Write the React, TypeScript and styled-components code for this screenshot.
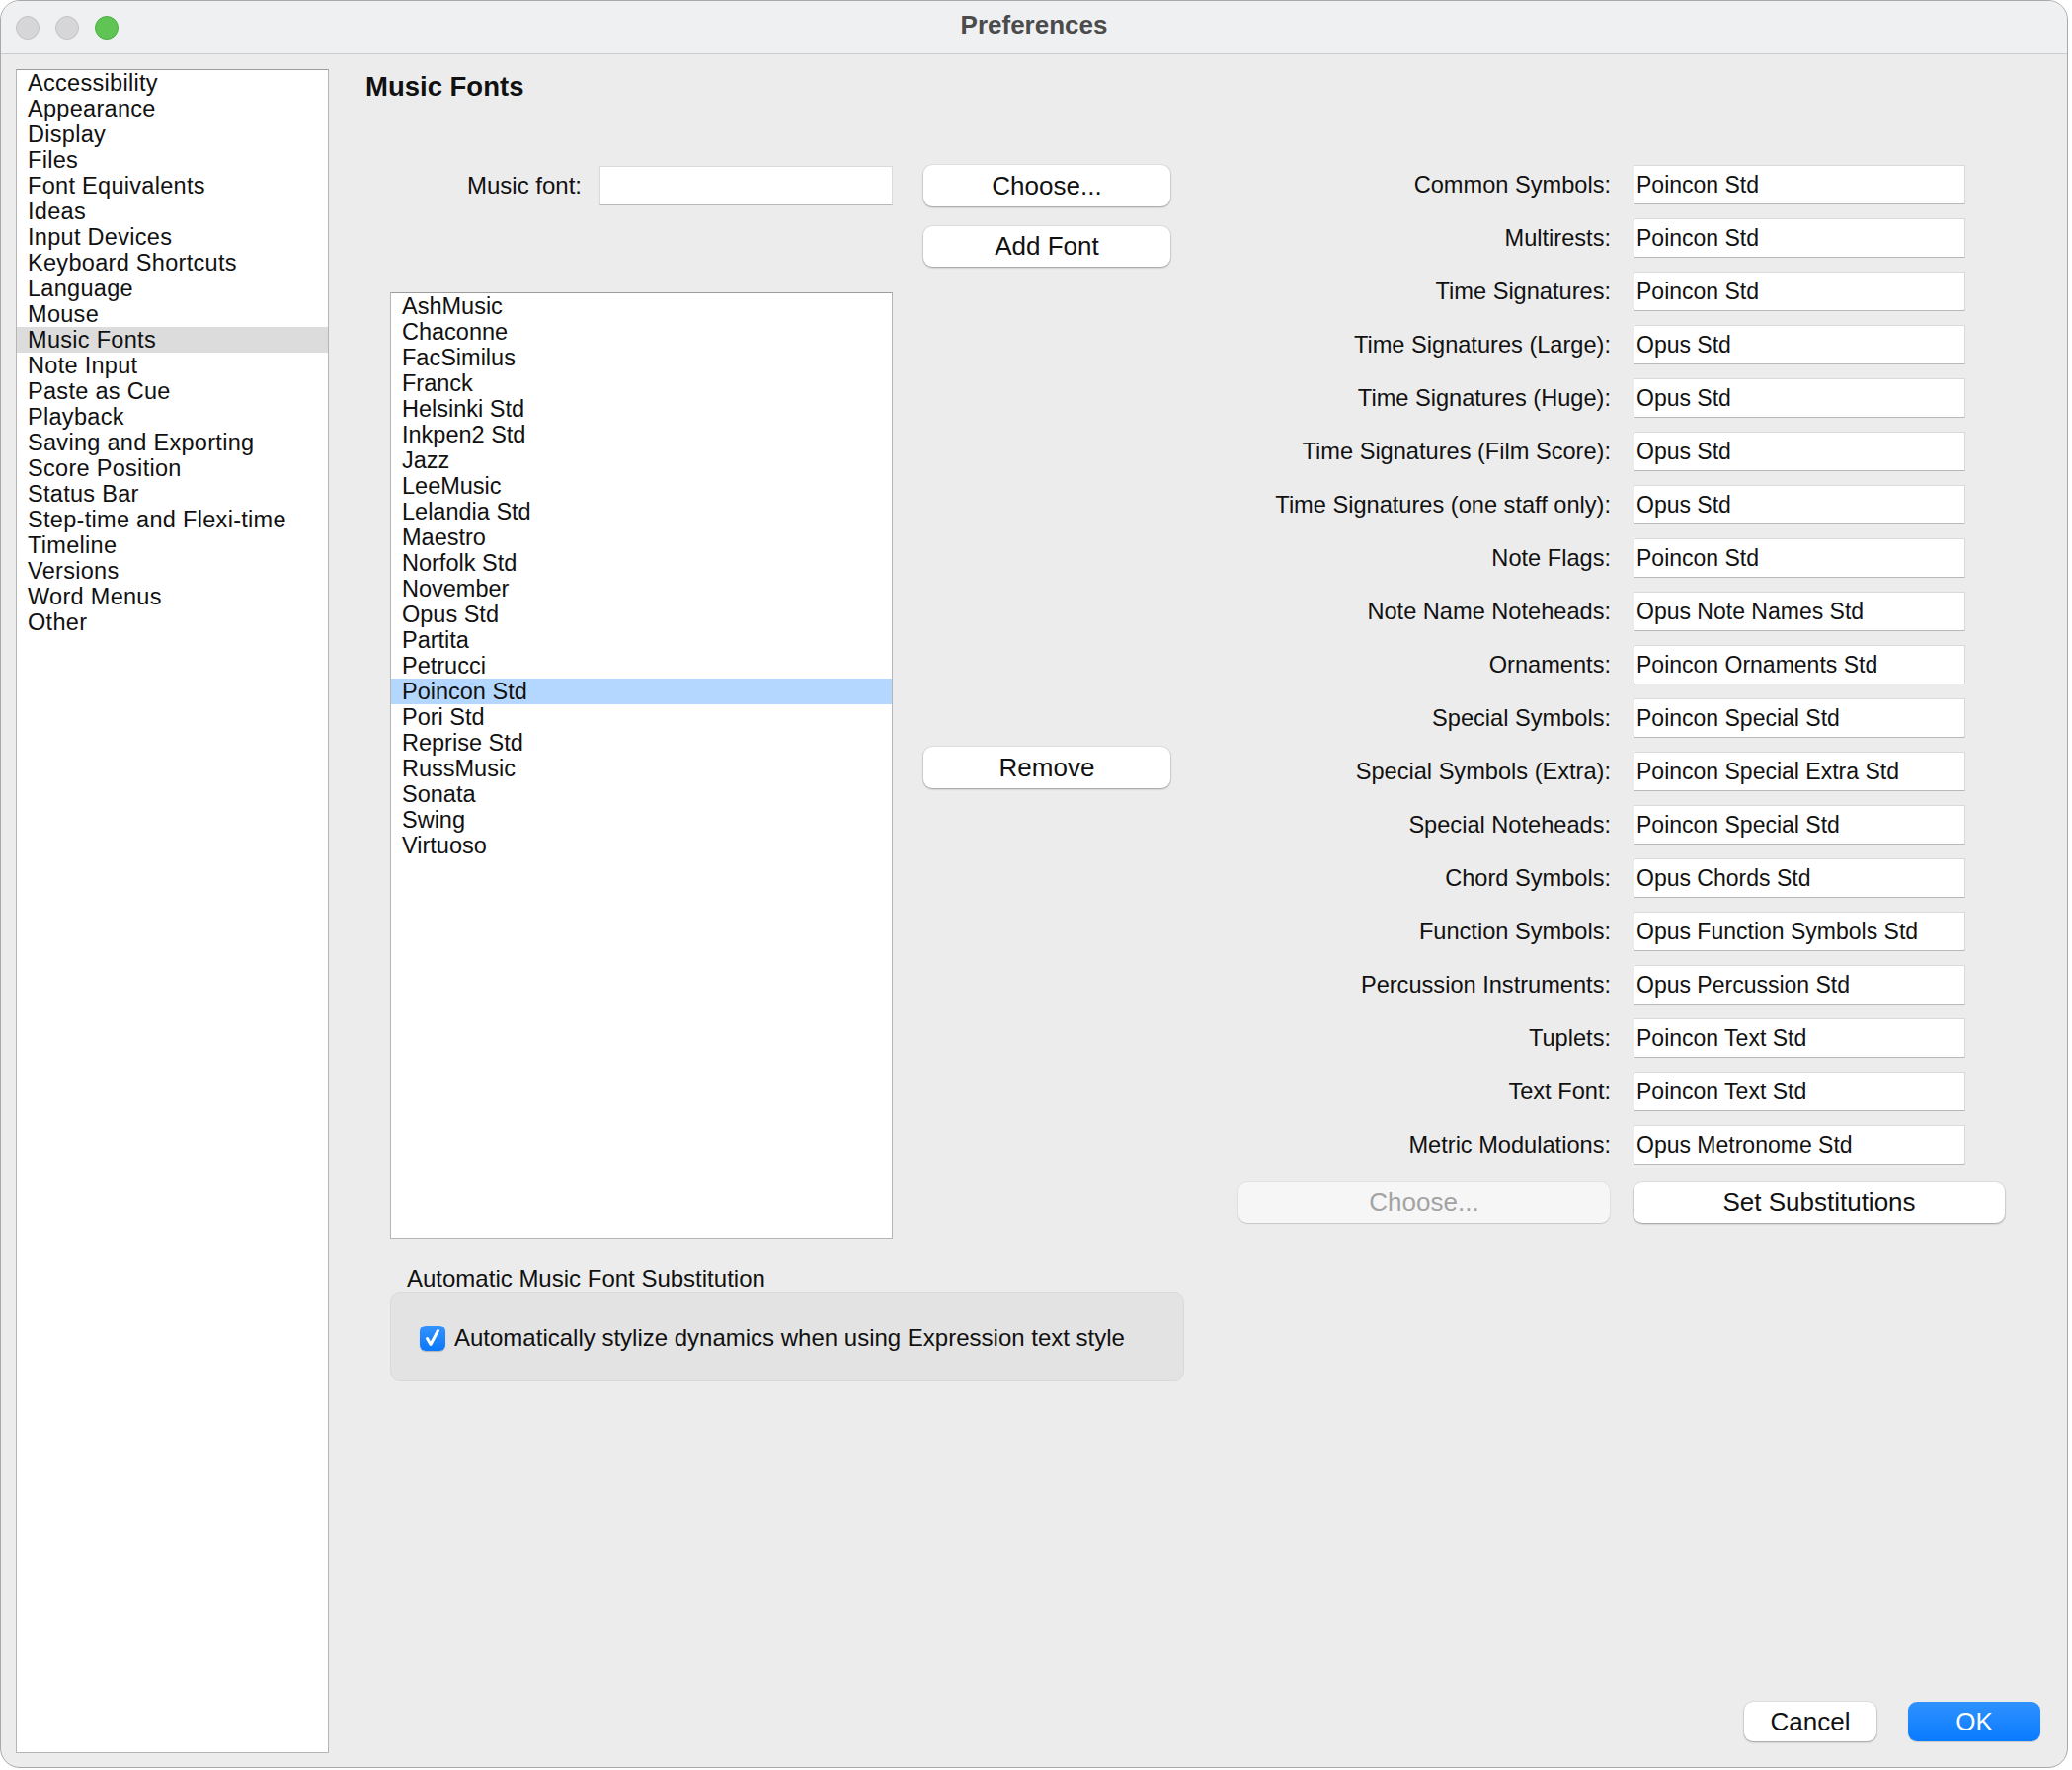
import React from "react";
import styled, { createGlobalStyle } from "styled-components";

const GlobalStyle = createGlobalStyle`
  html, body {
    margin: 0;
    padding: 0;
    background: #ffffff;
  }
  body {
    font-family: "Liberation Sans", Arial, sans-serif;
    color: #111111;
  }
  * {
    box-sizing: border-box;
  }
`;

const categories = [
  "Accessibility",
  "Appearance",
  "Display",
  "Files",
  "Font Equivalents",
  "Ideas",
  "Input Devices",
  "Keyboard Shortcuts",
  "Language",
  "Mouse",
  "Music Fonts",
  "Note Input",
  "Paste as Cue",
  "Playback",
  "Saving and Exporting",
  "Score Position",
  "Status Bar",
  "Step-time and Flexi-time",
  "Timeline",
  "Versions",
  "Word Menus",
  "Other",
];

const musicFonts = [
  "AshMusic",
  "Chaconne",
  "FacSimilus",
  "Franck",
  "Helsinki Std",
  "Inkpen2 Std",
  "Jazz",
  "LeeMusic",
  "Lelandia Std",
  "Maestro",
  "Norfolk Std",
  "November",
  "Opus Std",
  "Partita",
  "Petrucci",
  "Poincon Std",
  "Pori Std",
  "Reprise Std",
  "RussMusic",
  "Sonata",
  "Swing",
  "Virtuoso",
];

const substitutions: [string, string][] = [
  ["Common Symbols:", "Poincon Std"],
  ["Multirests:", "Poincon Std"],
  ["Time Signatures:", "Poincon Std"],
  ["Time Signatures (Large):", "Opus Std"],
  ["Time Signatures (Huge):", "Opus Std"],
  ["Time Signatures (Film Score):", "Opus Std"],
  ["Time Signatures (one staff only):", "Opus Std"],
  ["Note Flags:", "Poincon Std"],
  ["Note Name Noteheads:", "Opus Note Names Std"],
  ["Ornaments:", "Poincon Ornaments Std"],
  ["Special Symbols:", "Poincon Special Std"],
  ["Special Symbols (Extra):", "Poincon Special Extra Std"],
  ["Special Noteheads:", "Poincon Special Std"],
  ["Chord Symbols:", "Opus Chords Std"],
  ["Function Symbols:", "Opus Function Symbols Std"],
  ["Percussion Instruments:", "Opus Percussion Std"],
  ["Tuplets:", "Poincon Text Std"],
  ["Text Font:", "Poincon Text Std"],
  ["Metric Modulations:", "Opus Metronome Std"],
];

const App = () => {
  return (
    <>
      <GlobalStyle />
      <Window>
        <TitleBar>
          <Lights>
            <Light />
            <Light />
            <Light $green />
          </Lights>
          <Title>Preferences</Title>
          <div />
        </TitleBar>
        <Body>
          <Sidebar>
            {categories.map((c) => (
              <SideItem key={c} $active={c === "Music Fonts"}>
                {c}
              </SideItem>
            ))}
          </Sidebar>
          <Main>
            <Heading>Music Fonts</Heading>
            <Content>
              <LeftBlock>
                <LeftGrid>
                  <FontRow>
                    <FontLabel>Music font:</FontLabel>
                    <Field $width={297} />
                  </FontRow>
                  <Button $col={2} $row={1}>
                    Choose...
                  </Button>
                  <Button $col={2} $row={2}>
                    Add Font
                  </Button>
                  <FontList>
                    {musicFonts.map((f) => (
                      <ListItem key={f} $selected={f === "Poincon Std"}>
                        {f}
                      </ListItem>
                    ))}
                  </FontList>
                  <RemoveButton $col={2} $row={3}>
                    Remove
                  </RemoveButton>
                </LeftGrid>
                <GroupLabel>Automatic Music Font Substitution</GroupLabel>
                <GroupBox>
                  <CheckRow>
                    <CheckBox>
                      <svg width="26" height="26" viewBox="0 0 26 26">
                        <path
                          d="M7.5 13.5 L11 19.5 L18.5 5.5"
                          fill="none"
                          stroke="#ffffff"
                          strokeWidth="3"
                          strokeLinecap="round"
                          strokeLinejoin="round"
                        />
                      </svg>
                    </CheckBox>
                    <span>Automatically stylize dynamics when using Expression text style</span>
                  </CheckRow>
                </GroupBox>
              </LeftBlock>
              <RightGrid>
                {substitutions.map(([label, value]) => (
                  <React.Fragment key={label}>
                    <SubLabel>{label}</SubLabel>
                    <Field $width={336}>{value}</Field>
                  </React.Fragment>
                ))}
                <WideButton $disabled>Choose...</WideButton>
                <WideButton>Set Substitutions</WideButton>
              </RightGrid>
            </Content>
            <Footer>
              <DialogButton>Cancel</DialogButton>
              <DialogButton $primary>OK</DialogButton>
            </Footer>
          </Main>
        </Body>
      </Window>
    </>
  );
};

export default App;

const Window = styled.div`
  width: 2094px;
  height: 1790px;
  background: #ececec;
  border: 1px solid #a9a9a9;
  border-radius: 20px;
  overflow: hidden;
  display: flex;
  flex-direction: column;
`;

const TitleBar = styled.div`
  height: 54px;
  flex-shrink: 0;
  background: #eff0f2;
  border-bottom: 1px solid #cdcdcd;
  display: grid;
  grid-template-columns: 1fr auto 1fr;
  align-items: center;
`;

const Lights = styled.div`
  display: flex;
  gap: 16px;
  padding-left: 15px;
`;

const Light = styled.span<{ $green?: boolean }>`
  width: 24px;
  height: 24px;
  border-radius: 50%;
  background: ${({ $green }) => ($green ? "#5fc454" : "#d6d6d8")};
  border: 1px solid ${({ $green }) => ($green ? "#4fae45" : "#c3c3c5")};
`;

const Title = styled.div`
  font-size: 26px;
  font-weight: 700;
  color: #4b4b4b;
  padding-bottom: 5px;
`;

const Body = styled.div`
  flex: 1;
  display: flex;
  padding: 15px 15px 14px 15px;
  min-height: 0;
`;

const Sidebar = styled.div`
  width: 317px;
  flex-shrink: 0;
  background: #ffffff;
  border: 1px solid #b5b5b5;
  border-top-color: #9c9c9c;
`;

const SideItem = styled.div<{ $active?: boolean }>`
  height: 26px;
  line-height: 26px;
  padding-left: 11px;
  font-size: 23.5px;
  letter-spacing: 0.3px;
  background: ${({ $active }) => ($active ? "#dcdcdc" : "transparent")};
  white-space: nowrap;
`;

const Main = styled.div`
  flex: 1;
  display: flex;
  flex-direction: column;
  padding-left: 37px;
`;

const Heading = styled.h1`
  margin: 2px 0 0;
  font-size: 27.5px;
  line-height: 32px;
  font-weight: 700;
`;

const Content = styled.div`
  display: flex;
  gap: 55px;
  margin: 63px 0 0 25px;
`;

const LeftBlock = styled.div`
  width: 804px;
  display: flex;
  flex-direction: column;
`;

const LeftGrid = styled.div`
  display: grid;
  grid-template-columns: 509px 250px;
  grid-template-rows: 42px 41px auto;
  column-gap: 31px;
  row-gap: 20px;
`;

const FontRow = styled.div`
  grid-column: 1;
  grid-row: 1;
  display: flex;
  align-items: center;
  gap: 18px;
`;

const FontLabel = styled.div`
  width: 194px;
  text-align: right;
  font-size: 24px;
`;

const Field = styled.div<{ $width: number }>`
  width: ${({ $width }) => $width}px;
  height: 40px;
  line-height: 38px;
  padding-left: 2px;
  font-size: 23px;
  background: #ffffff;
  border: 1px solid #dadada;
  border-bottom-color: #b9b9b9;
  white-space: nowrap;
`;

const Button = styled.div<{ $col: number; $row: number }>`
  grid-column: ${({ $col }) => $col};
  grid-row: ${({ $row }) => $row};
  display: flex;
  align-items: center;
  justify-content: center;
  font-size: 26px;
  background: #ffffff;
  border-radius: 9px;
  box-shadow: 0 0 0 1px rgba(0, 0, 0, 0.05), 0 1px 2px rgba(0, 0, 0, 0.3);
`;

const RemoveButton = styled(Button)`
  align-self: center;
  height: 42px;
  margin-top: 10px;
`;

const FontList = styled.div`
  grid-column: 1;
  grid-row: 3;
  margin-top: 6px;
  height: 958px;
  background: #ffffff;
  border: 1px solid #b5b5b5;
  border-top-color: #9c9c9c;
`;

const ListItem = styled.div<{ $selected?: boolean }>`
  height: 26px;
  line-height: 26px;
  padding-left: 11px;
  font-size: 23.5px;
  background: ${({ $selected }) => ($selected ? "#b3d7ff" : "transparent")};
`;

const GroupLabel = styled.div`
  margin: 28px 0 0 17px;
  font-size: 24px;
  line-height: 26px;
`;

const GroupBox = styled.div`
  height: 90px;
  background: #e3e3e3;
  border: 1px solid #d9d9d9;
  border-radius: 10px;
  display: flex;
  align-items: center;
  padding: 4px 0 0 29px;
`;

const CheckRow = styled.label`
  display: flex;
  align-items: center;
  gap: 9px;
  font-size: 24px;
`;

const CheckBox = styled.span`
  width: 26px;
  height: 26px;
  border-radius: 6px;
  background: linear-gradient(#3593fd, #0a78fa);
  box-shadow: 0 1px 1px rgba(0, 0, 0, 0.2);
  display: flex;
`;

const RightGrid = styled.div`
  display: grid;
  grid-template-columns: 377px 376px;
  grid-auto-rows: 40px;
  column-gap: 23px;
  row-gap: 14px;
  align-content: start;
`;

const SubLabel = styled.div`
  text-align: right;
  line-height: 40px;
  font-size: 23.6px;
  white-space: nowrap;
`;

const WideButton = styled.div<{ $disabled?: boolean }>`
  width: 376px;
  height: 41px;
  margin-top: 4px;
  display: flex;
  align-items: center;
  justify-content: center;
  font-size: 26px;
  border-radius: 9px;
  background: ${({ $disabled }) => ($disabled ? "#f6f6f6" : "#ffffff")};
  color: ${({ $disabled }) => ($disabled ? "#a3a3a3" : "#111111")};
  box-shadow: ${({ $disabled }) =>
    $disabled
      ? "0 0 0 1px rgba(0, 0, 0, 0.04), 0 1px 1px rgba(0, 0, 0, 0.12)"
      : "0 0 0 1px rgba(0, 0, 0, 0.05), 0 1px 2px rgba(0, 0, 0, 0.3)"};
`;

const Footer = styled.div`
  margin-top: auto;
  display: flex;
  justify-content: flex-end;
  gap: 32px;
  padding: 0 12px 12px 0;
`;

const DialogButton = styled.div<{ $primary?: boolean }>`
  width: 134px;
  height: 40px;
  display: flex;
  align-items: center;
  justify-content: center;
  font-size: 26px;
  border-radius: 9px;
  color: ${({ $primary }) => ($primary ? "#ffffff" : "#111111")};
  background: ${({ $primary }) =>
    $primary ? "linear-gradient(#2f92fe, #0a7aff)" : "#ffffff"};
  box-shadow: ${({ $primary }) =>
    $primary
      ? "0 1px 1px rgba(0, 0, 0, 0.15)"
      : "0 0 0 1px rgba(0, 0, 0, 0.05), 0 1px 2px rgba(0, 0, 0, 0.3)"};
`;
